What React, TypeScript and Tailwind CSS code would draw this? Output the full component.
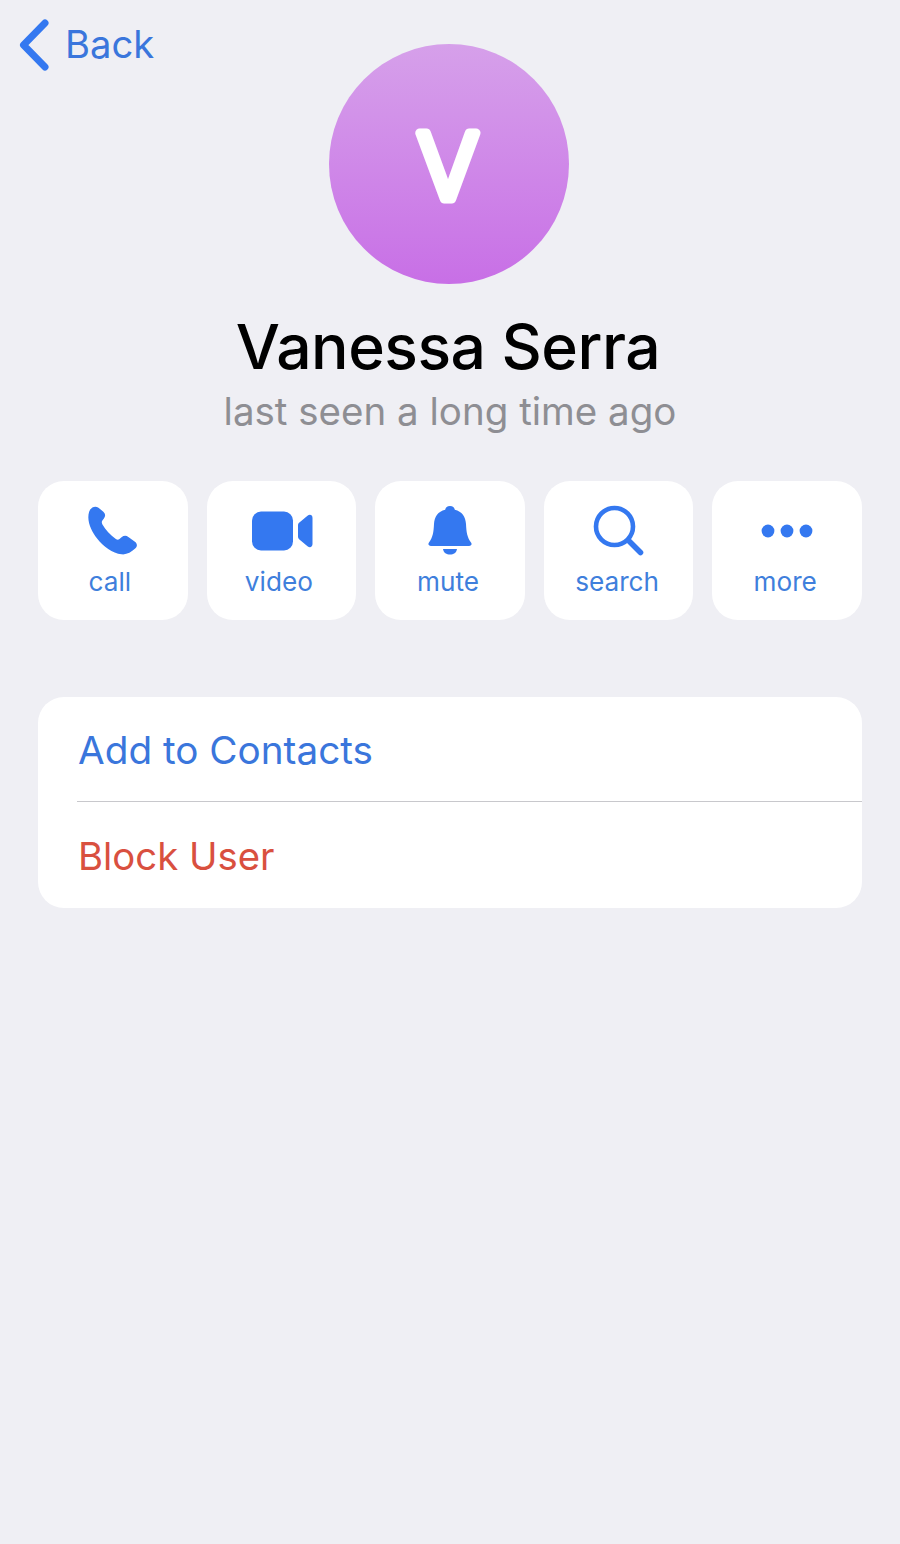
import React from "react";

const blue = "text-[#3478f0]";

const PhoneIcon = () => (
  <svg width="50" height="50" viewBox="5 2 44 44" className={blue} fill="currentColor">
    <path d="M6 7C7.5 2.8 11.5 1.5 14.2 3.5L18.5 7C20.5 9 20.5 11 19 13L17.5 15C17 16 17 17 17.7 18.2C20.5 23 24.5 27.5 29.5 31C30.7 31.8 31.7 31.8 32.7 31L34.5 29.5C36.5 28 38.5 27.8 40.5 29.2L46 33.2C48.5 35 48.7 37.5 46.5 39.5C43 42.8 39 45 34.5 44.5C26.5 43.5 18.5 37.5 13 30.5C8 24 3.5 15 6 7Z" />
  </svg>
);

const VideoIcon = () => (
  <svg width="62" height="40" viewBox="0 0 62 40" className={blue} fill="currentColor">
    <rect x="0" y="0.5" width="41" height="39" rx="9" />
    <path d="M46 14.5C46 13.3 46.4 12.4 47.4 11.6L55.5 4.8C57.8 3 60.5 3.8 60.5 7V33C60.5 36.2 57.8 37 55.5 35.2L47.4 28.4C46.4 27.6 46 26.7 46 25.5Z" />
  </svg>
);

const BellIcon = () => (
  <svg width="46" height="50" viewBox="0 0 46 50" className={blue} fill="currentColor">
    <path d="M23 0C25.8 0 27.5 1.6 27.8 3.8C35 5.4 38.6 11 39 18C39.4 26 40 31 44 36.5C45.2 38.2 44.5 40 42 40H4C1.5 40 0.8 38.2 2 36.5C6 31 6.6 26 7 18C7.4 11 11 5.4 18.2 3.8C18.5 1.6 20.2 0 23 0Z" />
    <path d="M16 43H30C29.5 46.8 26.5 48.5 23 48.5C19.5 48.5 16.5 46.8 16 43Z" />
  </svg>
);

const SearchIcon = () => (
  <svg width="52" height="52" viewBox="0 0 52 52" className={blue} fill="none" stroke="currentColor">
    <circle cx="21.5" cy="21.5" r="18.5" strokeWidth="4.6" />
    <path d="M35.5 35.5L47.5 47.5" strokeWidth="5.6" strokeLinecap="round" />
  </svg>
);

const MoreIcon = () => (
  <svg width="52" height="14" viewBox="0 0 52 14" className={blue} fill="currentColor">
    <circle cx="7" cy="7" r="6.4" />
    <circle cx="26" cy="7" r="6.4" />
    <circle cx="45" cy="7" r="6.4" />
  </svg>
);

const actions = [
  { label: "call", icon: <PhoneIcon />, shift: "", textShift: "-ml-[6px]" },
  { label: "video", icon: <VideoIcon />, shift: "pl-[3px]", textShift: "-ml-[5px]" },
  { label: "mute", icon: <BellIcon />, shift: "", textShift: "-ml-[4px]" },
  { label: "search", icon: <SearchIcon />, shift: "", textShift: "-ml-[3px]" },
  { label: "more", icon: <MoreIcon />, shift: "", textShift: "-ml-[4px]" },
];

export default function App() {
  return (
    <div className="min-h-[1544px] bg-[#efeff4] font-['Inter','Liberation_Sans',sans-serif]">
      <div className="h-[90px] pl-[19px] flex items-center gap-[16px]">
        <svg width="30" height="52" viewBox="0 0 30 52" className={blue} fill="none" stroke="currentColor">
          <path d="M26 4L4.5 26L26 48" strokeWidth="7" strokeLinecap="round" strokeLinejoin="round" />
        </svg>
        <span className="-mt-[2px] text-[38.2px] leading-none text-[#3a76dc]">Back</span>
      </div>

      <div className="-mt-[46px] flex flex-col items-center">
        <div className="w-[240px] h-[240px] -ml-[2px] rounded-full bg-gradient-to-b from-[#d6a0ea] to-[#c86fe6] flex items-center justify-center">
          <svg width="140" height="140" viewBox="0 0 140 140">
            <text x="69" y="104.5" textAnchor="middle" fontSize="91" fontWeight="300" fill="white" stroke="white" strokeWidth="9" strokeLinejoin="round">V</text>
          </svg>
        </div>
        <h1 className="mt-[28px] -ml-[4px] text-[62.4px] leading-[70px] font-medium text-black tracking-[-0.5px]">Vanessa Serra</h1>
        <p className="mt-[7px] text-[38.5px] leading-[44px] text-[#8e8e93]">last seen a long time ago</p>
      </div>

      <div className="mt-[48px] px-[38px] grid grid-cols-5 gap-[19px]">
        {actions.map((a) => (
          <div key={a.label} className="h-[139px] rounded-[26px] bg-white flex flex-col items-center">
            <div className={`h-[74px] mt-[13px] flex items-center ${a.shift}`}>{a.icon}</div>
            <span className={`-mt-[1px] text-[26.2px] leading-[30px] text-[#3f7fdc] ${a.textShift}`}>{a.label}</span>
          </div>
        ))}
      </div>

      <div className="mt-[77px] mx-[38px] rounded-[26px] bg-white">
        <div className="h-[104px] pl-[40px] pt-[2px] flex items-center text-[38.7px] text-[#3a76dc]">Add to Contacts</div>
        <div className="ml-[39px] h-[1px] bg-[#c8c8cc]" />
        <div className="h-[106px] pl-[40px] pt-[3px] flex items-center text-[38.3px] text-[#d9503f]">Block User</div>
      </div>
    </div>
  );
}
